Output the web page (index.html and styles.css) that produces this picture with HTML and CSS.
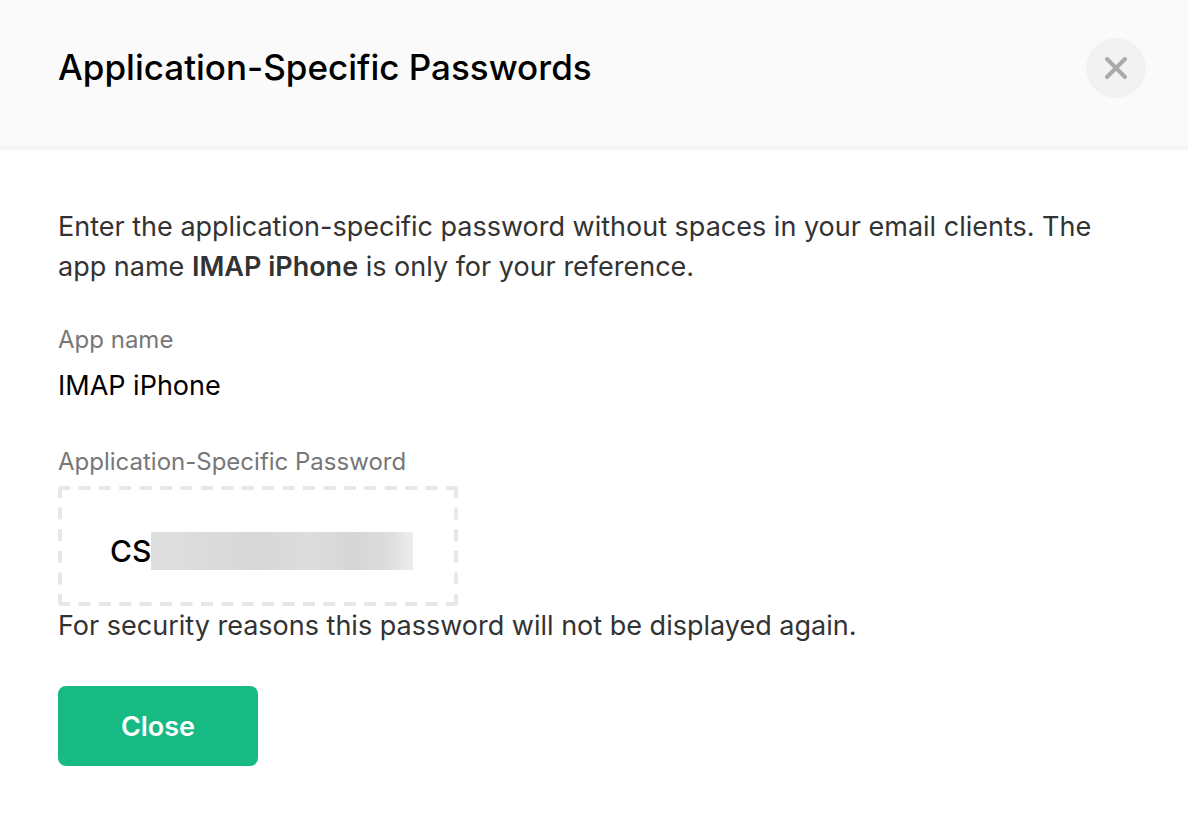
FILE: index.html
```html
<!DOCTYPE html>
<html lang="en">
<head>
  <meta charset="UTF-8">
  <meta name="viewport" content="width=device-width, initial-scale=1.0">
  <title>Application-Specific Passwords</title>
  <link rel="stylesheet" href="styles.css">
</head>
<body>
  <header class="popup-header">
    <h1>Application-Specific Passwords</h1>
    <button type="button" class="close-icon" aria-label="Close popup">
      <svg viewBox="0 0 24 24" width="24" height="24" aria-hidden="true">
        <path d="M3 3L21 21M21 3L3 21" fill="none" stroke="currentColor" stroke-width="4" stroke-linecap="round"/>
      </svg>
    </button>
  </header>

  <main class="popup-body">
    <p class="description">Enter the application-specific password without spaces in your email clients. The app name <b>IMAP iPhone</b> is only for your reference.</p>

    <!-- App details -->
    <dl class="details">
      <dt>App name</dt>
      <dd class="app-name">IMAP iPhone</dd>
      <dt>Application-Specific Password</dt>
      <dd class="password-box">
        <svg class="dashes" viewBox="0 0 400 120" aria-hidden="true">
          <path d="M0 2H400M0 118H400" stroke-dasharray="12 8.42"/>
          <path d="M2 0V120M398 0V120" stroke-dasharray="12 9.6"/>
        </svg>
        <span>CS</span><span class="masked"></span>
      </dd>
    </dl>

    <p class="note">For security reasons this password will not be displayed again.</p>
    <button type="button" class="btn">Close</button>
  </main>
</body>
</html>
```

FILE: styles.css
```css
* { box-sizing: border-box; }
body { margin: 0; font-family: Inter, "Open Sans", sans-serif; font-size: 27px; line-height: 40px; color: #333; background: #fff; }

/* Header */
.popup-header { display: flex; justify-content: space-between; align-items: flex-start; min-height: 150px; padding: 38px 42px 0 58px; background: #fafafa; border-bottom: 4px solid #f4f4f4; }
h1 { margin: 0; font-size: 35px; font-weight: 500; line-height: 58px; color: #000; }
.close-icon { display: flex; justify-content: center; align-items: center; width: 60px; height: 60px; padding: 0; border: none; border-radius: 50%; background: #f2f2f2; color: #aaa; cursor: pointer; }

/* Body */
.popup-body { padding: 57px 58px 56px; }
p { margin: 0; }
.description b { font-weight: 600; }
.details { margin: 35px 0 0; }
dt { font-size: 24px; line-height: 36px; color: #777; }
dd { margin: 0; }
.app-name { margin: 8px 0 38px; color: #000; }

/* Password */
.password-box { position: relative; display: flex; align-items: center; width: 400px; height: 120px; margin-top: 6px; padding: 10px 0 0 52px; font-size: 30px; font-weight: 500; color: #000; }
.dashes { position: absolute; inset: 0; width: 100%; height: 100%; border-radius: 4px; overflow: hidden; }
.dashes path { fill: none; stroke: #e7e7e7; stroke-width: 4px; }
.masked { width: 262px; height: 38px; background: linear-gradient(90deg, #dfdfdf, #d7d7d7 42%, #dddddd 60%, #d6d6d6 78%, #dcdcdc 90%, #eee); }

.btn { display: block; width: 200px; height: 80px; margin-top: 40px; border: none; border-radius: 8px; background: #17ba83; color: #fff; font: 600 27px Inter, sans-serif; cursor: pointer; }
```
